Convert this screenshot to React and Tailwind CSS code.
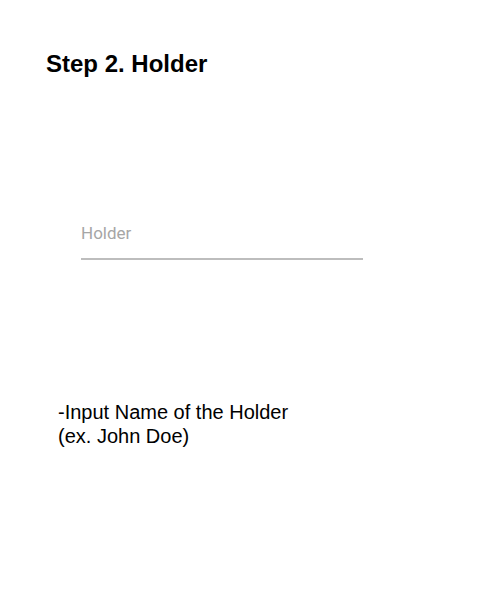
import React from 'react';

export default function App() {
  return (
    <div className="w-[500px] h-[602px] bg-white font-['Liberation_Sans',Arial,sans-serif] text-black">
      <div className="pt-[48px] pl-[46px]">
        <h1 className="text-[24px] font-bold leading-[32px]">Step 2. Holder</h1>
      </div>

      <div className="pt-[142px] pl-[81px]">
        <div className="w-[282px] border-b-2 border-[#bdbdbd] pb-[12px]">
          <input
            type="text"
            placeholder="Holder"
            className="w-full outline-none text-[17px] leading-[20px] font-['Roboto',sans-serif] placeholder:text-[#a6a6a6] bg-transparent"
          />
        </div>
      </div>

      <div className="pt-[140px] pl-[58px] text-[20px] leading-[24px]">
        <p>-Input Name of the Holder</p>
        <p>(ex. John Doe)</p>
      </div>
    </div>
  );
}
